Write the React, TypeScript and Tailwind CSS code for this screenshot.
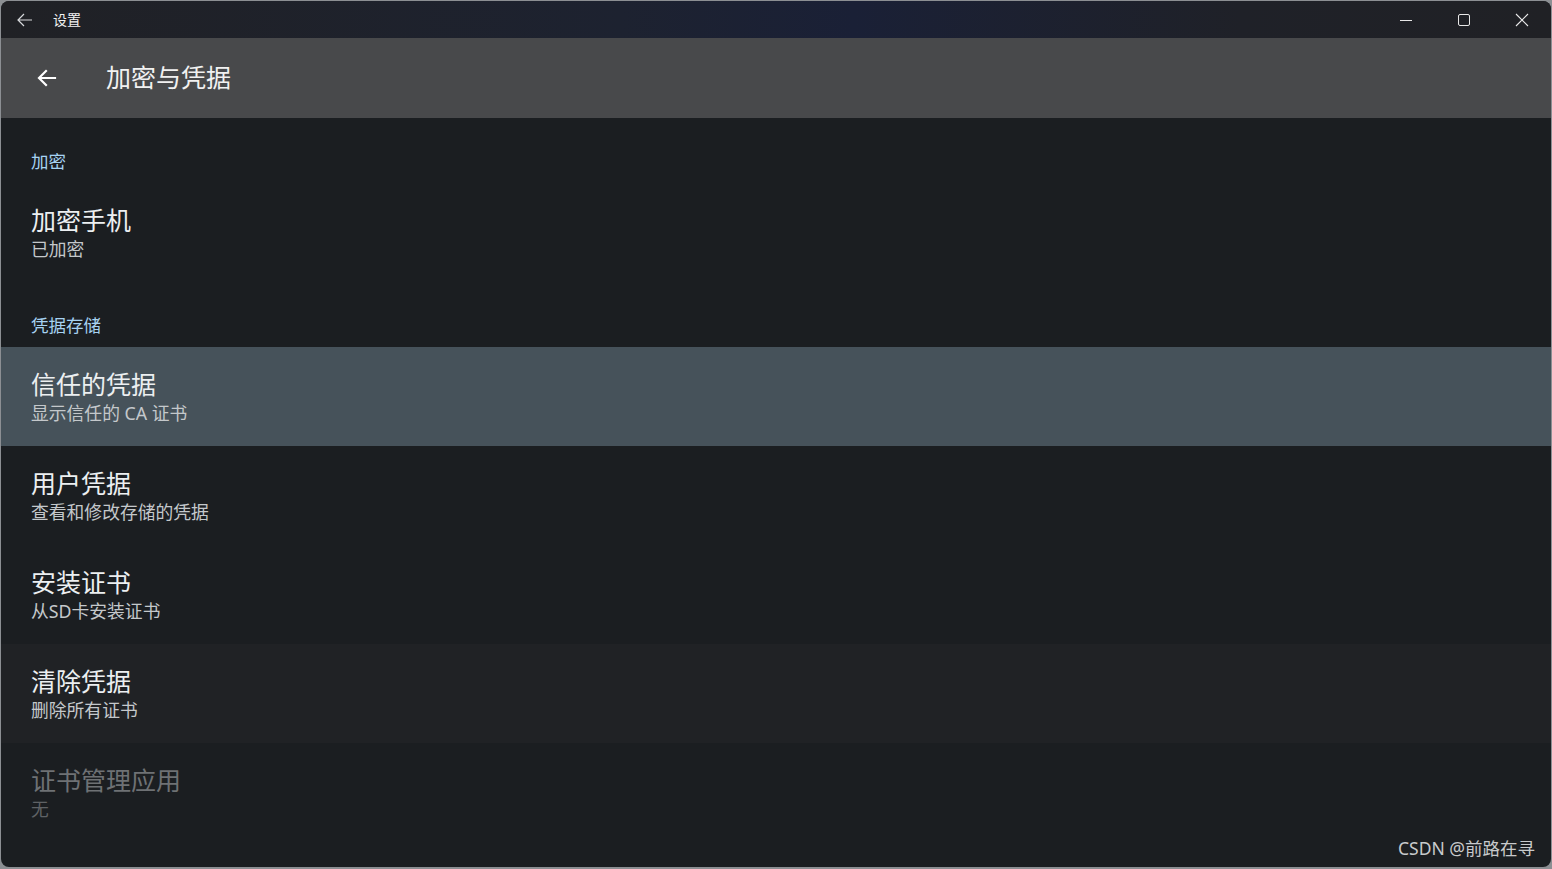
const font = {
  fontFamily: '"Noto Sans", "Noto Sans CJK SC", sans-serif',
};

type Row = {
  title: string;
  summary: string;
  tone?: "active" | "hover" | "disabled";
};

const Section = ({ label }: { label: string }) => (
  <div className="flex h-[65px] items-end px-[30px] pb-[9px] text-[17.5px] text-[#a6d2f2]">
    {label}
  </div>
);

const PrefRow = ({ title, summary, tone }: Row) => {
  const bg =
    tone === "active"
      ? "bg-[#46525a]"
      : tone === "hover"
        ? "bg-[#202225]"
        : "bg-transparent";
  const titleColor = tone === "disabled" ? "text-[#6e7174]" : "text-[#eceff1]";
  const subColor = tone === "disabled" ? "text-[#5f6265]" : "text-[#c4c8cb]";
  return (
    <div className={`flex h-[99px] flex-col justify-center px-[30px] pt-[3px] ${bg}`}>
      <div className={`text-[25px] leading-[31px] ${titleColor}`}>{title}</div>
      <div className={`text-[17.8px] leading-[27px] ${subColor}`}>{summary}</div>
    </div>
  );
};

const TitleBar = () => (
  <div className="flex h-[37px] items-center bg-[linear-gradient(90deg,#202125_0%,#1d2230_40%,#1a2036_55%,#1f2128_80%,#202125_100%)]">
    <svg width="20" height="20" viewBox="0 0 20 20" className="ml-[14px]" fill="none" stroke="#d7d9dc" strokeWidth="1.2">
      <path d="M17 10H3M9 4l-6 6 6 6" />
    </svg>
    <span className="ml-[18px] text-[14px] text-[#f2f2f2]">设置</span>
    <div className="ml-auto flex h-full items-center">
      <div className="flex h-full w-[58px] items-center justify-center">
        <svg width="12" height="12" viewBox="0 0 12 12" stroke="#e8e8e8" strokeWidth="1">
          <path d="M0 6.5h12" />
        </svg>
      </div>
      <div className="flex h-full w-[58px] items-center justify-center">
        <svg width="12" height="12" viewBox="0 0 12 12" fill="none" stroke="#e8e8e8" strokeWidth="1">
          <rect x="0.5" y="0.5" width="11" height="11" rx="1.5" />
        </svg>
      </div>
      <div className="flex h-full w-[58px] items-center justify-center">
        <svg width="14" height="14" viewBox="0 0 14 14" stroke="#e8e8e8" strokeWidth="1.1">
          <path d="M1 1l12 12M13 1L1 13" />
        </svg>
      </div>
    </div>
  </div>
);

const Header = () => (
  <div className="flex h-[80px] items-center bg-[#48494b]">
    <svg width="24" height="24" viewBox="0 0 24 24" className="ml-[34px]" fill="none" stroke="#ffffff" strokeWidth="2.2" strokeLinecap="square">
      <path d="M20 12H5M11 5l-7 7 7 7" />
    </svg>
    <h1 className="ml-[47px] text-[25px] font-normal text-[#f1f1f1]">加密与凭据</h1>
  </div>
);

export default function App() {
  return (
    <div className="h-[869px] w-[1552px] overflow-hidden bg-[#8c8f93]" style={font}>
      <div className="mx-[1px] mt-[1px] flex h-[866px] flex-col overflow-hidden rounded-[8px] bg-[#1b1e21]">
        <TitleBar />
        <Header />
        <main className="relative flex-1">
          <Section label="加密" />
          <PrefRow title="加密手机" summary="已加密" />
          <Section label="凭据存储" />
          <PrefRow title="信任的凭据" summary="显示信任的 CA 证书" tone="active" />
          <PrefRow title="用户凭据" summary="查看和修改存储的凭据" />
          <PrefRow title="安装证书" summary="从SD卡安装证书" />
          <PrefRow title="清除凭据" summary="删除所有证书" tone="hover" />
          <PrefRow title="证书管理应用" summary="无" tone="disabled" />
          <span className="absolute right-[16px] bottom-[6px] text-[17.5px] text-[#c8cacc]">
            CSDN @前路在寻
          </span>
        </main>
      </div>
    </div>
  );
}
